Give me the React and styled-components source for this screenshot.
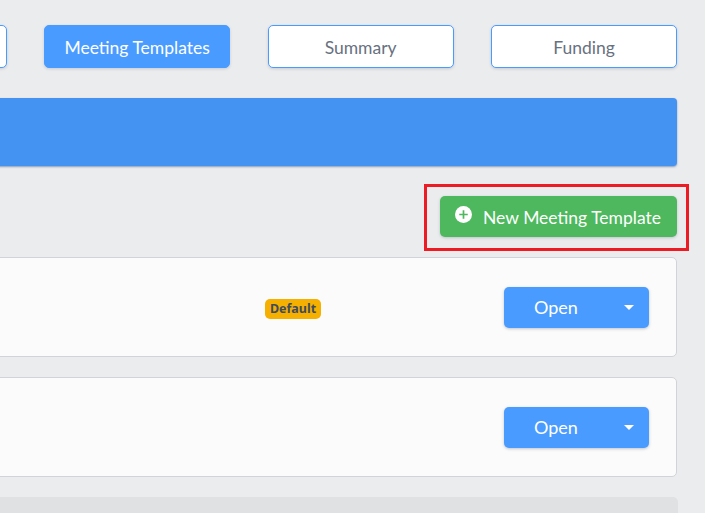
import styled, { createGlobalStyle } from "styled-components";

const GlobalStyle = createGlobalStyle`
  html, body {
    margin: 0;
    padding: 0;
    height: 100%;
    overflow: hidden;
    background: #ebecee;
  }
`;

const Page = styled.div`
  width: 705px;
  height: 513px;
  overflow: hidden;
  display: flex;
  justify-content: flex-end;
  background: #ebecee;
  font-family: "Lato", "Noto Sans", sans-serif;
`;

const Content = styled.main`
  flex: 0 0 900px;
  box-sizing: border-box;
  padding: 25px 28px 0 0;
`;

const Tabs = styled.nav`
  display: flex;
  justify-content: flex-end;
  gap: 37.75px;
`;

const Tab = styled.button`
  box-sizing: border-box;
  width: 185.75px;
  height: 43px;
  padding: 2px 0 0;
  border-radius: 5px;
  border: 1px solid #4a9bff;
  background: ${(p) => (p.$active ? "#4a9bff" : "#ffffff")};
  color: ${(p) => (p.$active ? "#ffffff" : "#68717f")};
  font: inherit;
  font-size: 17.5px;
  box-shadow: 0 1px 3px rgba(60, 70, 90, 0.2);
`;

const Banner = styled.div`
  height: 68px;
  margin-top: 30px;
  background: #4493f3;
  border-radius: 4px;
  box-shadow: 0 1px 2px rgba(40, 80, 140, 0.5);
`;

const Actions = styled.div`
  display: flex;
  justify-content: flex-end;
  margin-top: 30px;
`;

const Highlighted = styled.div`
  position: relative;

  &::after {
    content: "";
    position: absolute;
    inset: -12px -12px -14px -16px;
    border: 3px solid #ed1c24;
    pointer-events: none;
  }
`;

const NewButton = styled.button`
  box-sizing: border-box;
  width: 237px;
  height: 41px;
  display: flex;
  align-items: center;
  justify-content: center;
  gap: 11px;
  padding: 2px 1px 0 0;
  border: 0;
  border-radius: 5px;
  background: #4db85d;
  color: #ffffff;
  font: inherit;
  font-size: 17.5px;
  box-shadow: 0 1px 3px rgba(60, 70, 90, 0.25);
`;

const PlusIcon = styled.svg`
  width: 17px;
  height: 17px;
  margin-top: -6px;
`;

const List = styled.div`
  display: flex;
  flex-direction: column;
  gap: 20px;
  margin-top: 20px;
`;

const Card = styled.article`
  box-sizing: border-box;
  height: 100px;
  display: flex;
  align-items: center;
  justify-content: flex-end;
  padding-right: 27px;
  background: #fbfbfb;
  border: 1px solid #d2d3d9;
  border-radius: 5px;
`;

const Badge = styled.span`
  box-sizing: border-box;
  width: 56px;
  height: 20px;
  margin-right: 183px;
  margin-top: 3px;
  display: flex;
  align-items: center;
  justify-content: center;
  background: #f5b000;
  color: #3f4a5f;
  border-radius: 5px;
  font-family: "Noto Sans", sans-serif;
  font-size: 12.5px;
  font-weight: 700;
`;

const OpenButton = styled.button`
  box-sizing: border-box;
  width: 145px;
  height: 41px;
  display: flex;
  align-items: center;
  padding: 0 15px 0 30px;
  border: 0;
  border-radius: 5px;
  background: #4a9bff;
  color: #ffffff;
  font: inherit;
  font-size: 18px;
  box-shadow: 0 1px 3px rgba(60, 70, 90, 0.3);
`;

const OpenLabel = styled.span`
  flex: 1;
  text-align: left;
`;

const Caret = styled.span`
  width: 0;
  height: 0;
  border-left: 5px solid transparent;
  border-right: 5px solid transparent;
  border-top: 5px solid #ffffff;
`;

const GhostCard = styled.div`
  height: 60px;
  margin-right: -1px;
  background: #e0e1e3;
  border-radius: 5px;
`;

const templates = [{ id: 1, isDefault: true }, { id: 2 }];

export default function App() {
  return (
    <Page>
      <GlobalStyle />
      <Content>
        <Tabs>
          <Tab aria-label="Previous tab" />
          <Tab $active>Meeting Templates</Tab>
          <Tab>Summary</Tab>
          <Tab>Funding</Tab>
        </Tabs>
        <Banner />
        <Actions>
          <Highlighted>
            <NewButton>
              <PlusIcon viewBox="0 0 24 24">
                <circle cx="12" cy="12" r="12" fill="#ffffff" />
                <path d="M12 6v12M6 12h12" stroke="#4db85d" strokeWidth="2.4" />
              </PlusIcon>
              New Meeting Template
            </NewButton>
          </Highlighted>
        </Actions>
        <List>
          {templates.map((t) => (
            <Card key={t.id}>
              {t.isDefault && <Badge>Default</Badge>}
              <OpenButton>
                <OpenLabel>Open</OpenLabel>
                <Caret />
              </OpenButton>
            </Card>
          ))}
          <GhostCard />
        </List>
      </Content>
    </Page>
  );
}
